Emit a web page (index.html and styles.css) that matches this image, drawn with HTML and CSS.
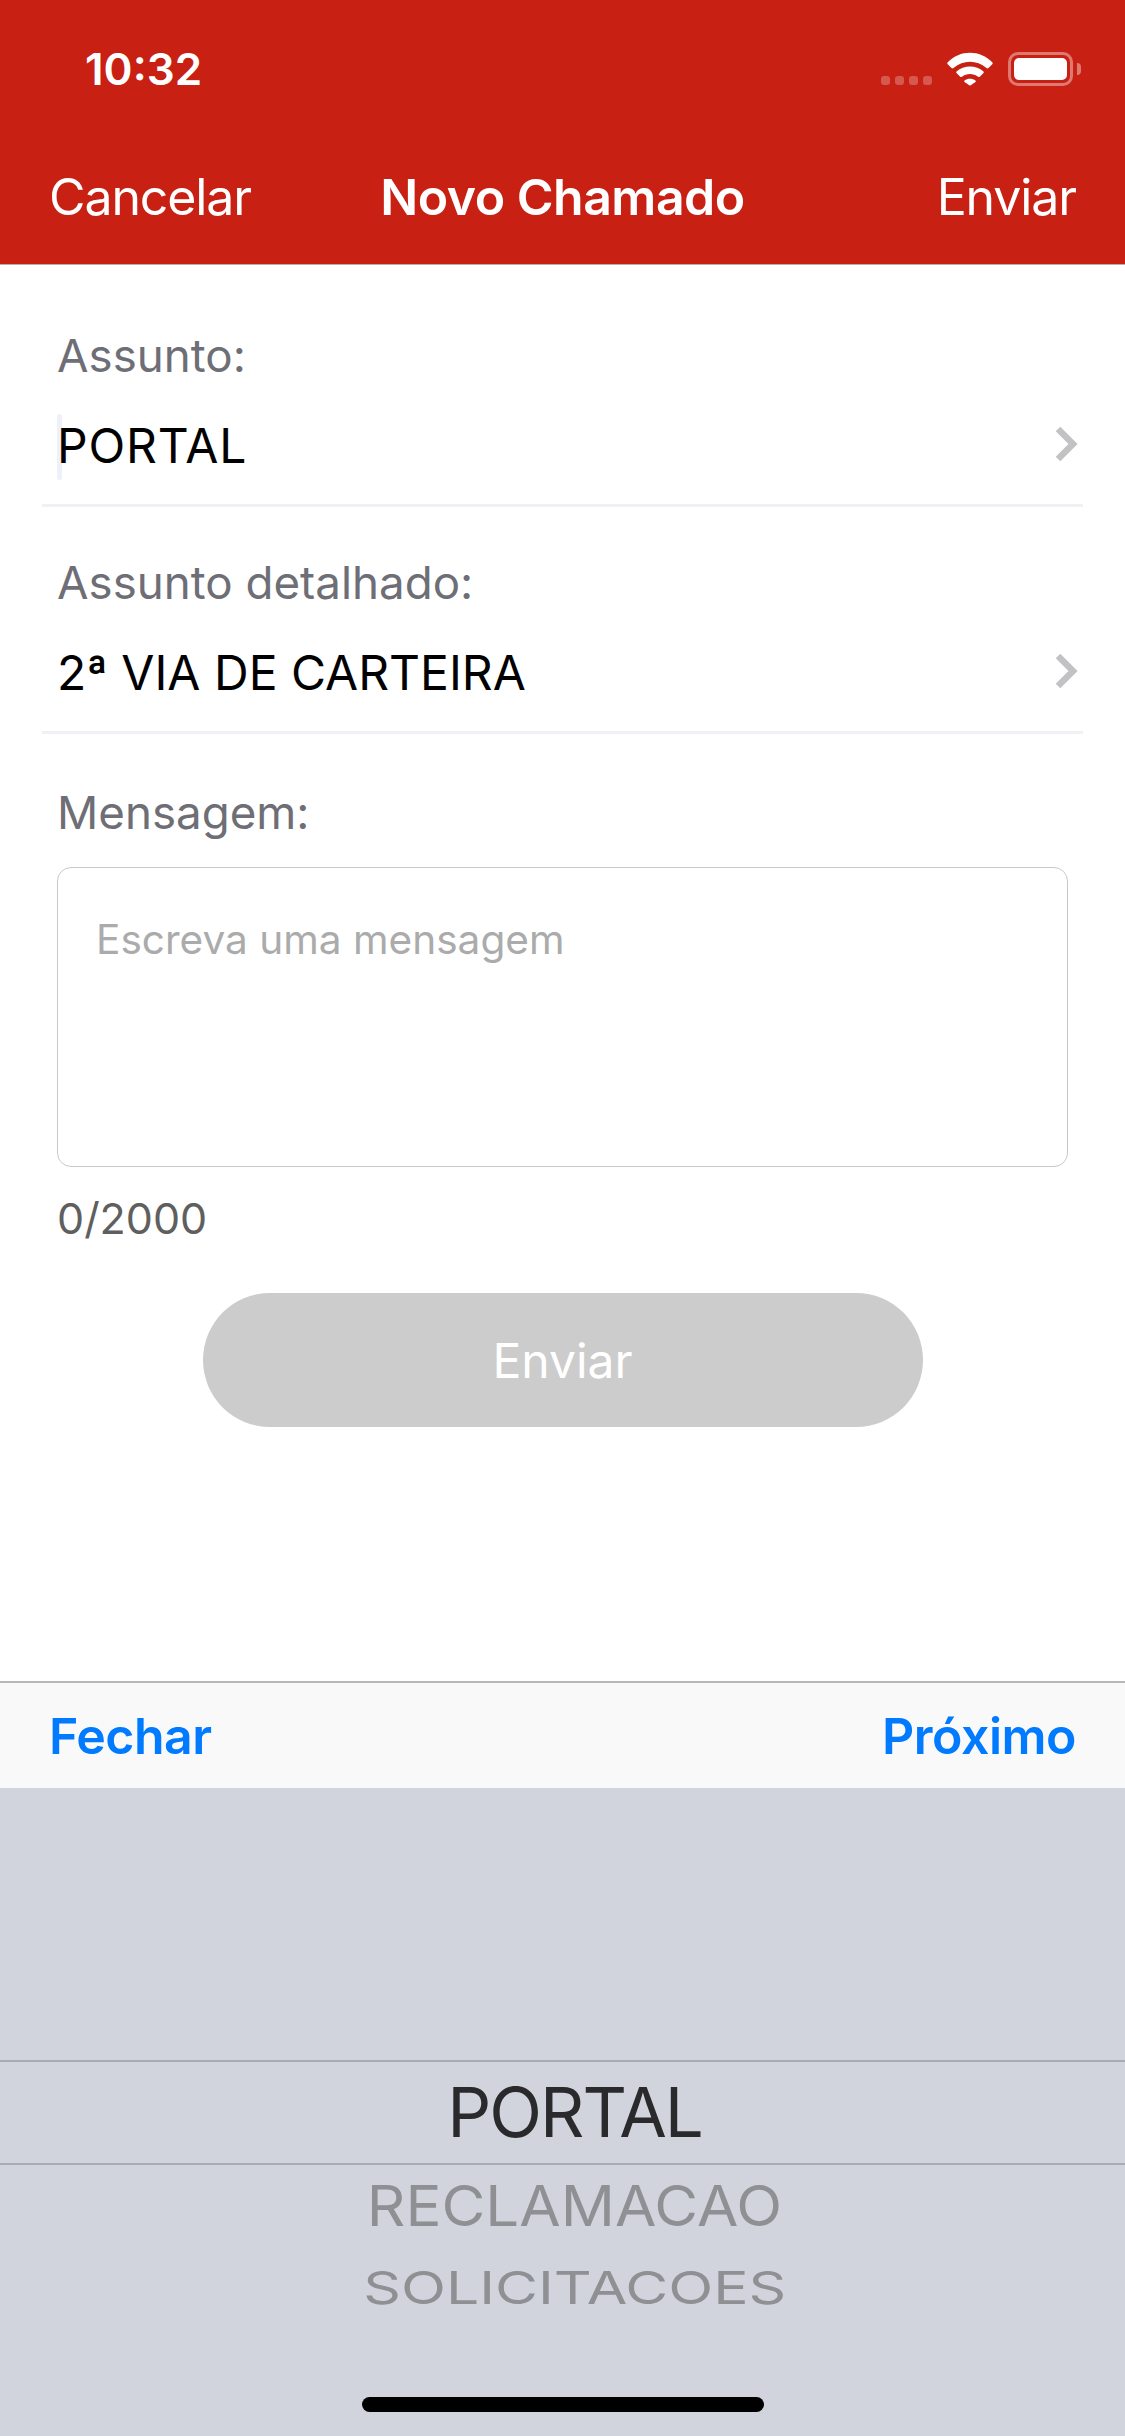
FILE: index.html
```html
<!DOCTYPE html>
<html lang="pt-BR">
<head>
    <meta charset="UTF-8">
    <meta name="viewport" content="width=device-width, initial-scale=1.0">
    <title>Novo Chamado</title>
    <link rel="stylesheet" href="styles.css">
</head>
<body>
    <div class="header">
        <div class="status-bar">
            <span class="time">10:32</span>
            <div class="status-icons">
                <div class="signal">
                    <span></span><span></span><span></span><span></span>
                </div>
                <svg class="wifi" width="46" height="34" viewBox="0 0 46 34">
                    <path d="M0.500 10.500 C13 -2.500 33 -2.500 45.500 10.500 Q46 11.500 45 12.500 L41.500 16 Q40.500 16.800 39.500 16 C29.500 7.500 16.500 7.500 6.500 16 Q5.500 16.800 4.500 16 L1 12.500 Q0 11.500 0.500 10.500 Z" fill="#fff"/>
                    <path d="M9.500 19.500 C17 12.800 29 12.800 36.500 19.500 Q37.200 20.300 36.500 21 L32.800 24.700 Q32 25.300 31 24.700 C26.500 21 19.500 21 15 24.700 Q14 25.300 13.200 24.700 L9.500 21 Q8.800 20.300 9.500 19.500 Z" fill="#fff"/>
                    <path d="M17.500 28.500 C20.500 26.300 25.500 26.300 28.500 28.500 Q29.200 29.200 28.500 30 L23.700 33.300 Q23 33.800 22.300 33.300 L17.500 30 Q16.800 29.200 17.500 28.500 Z" fill="#fff"/>
                </svg>
                <div class="battery">
                    <div class="battery-body"><div class="battery-level"></div></div>
                    <div class="battery-tip"></div>
                </div>
            </div>
        </div>
        <div class="nav-bar">
            <span class="nav-link">Cancelar</span>
            <span class="nav-title">Novo Chamado</span>
            <span class="nav-link nav-right">Enviar</span>
        </div>
    </div>

    <div class="form">
        <div class="field">
            <div class="field-label">Assunto:</div>
            <div class="field-row">
                <span class="field-value has-caret">PORTAL</span>
                <svg class="chevron" width="24" height="36" viewBox="0 0 24 36"><path d="M4 3 L19 18 L4 33" fill="none" stroke="#c2c2c4" stroke-width="6.500"/></svg>
            </div>
        </div>
        <div class="field">
            <div class="field-label">Assunto detalhado:</div>
            <div class="field-row">
                <span class="field-value">2ª VIA DE CARTEIRA</span>
                <svg class="chevron" width="24" height="36" viewBox="0 0 24 36"><path d="M4 3 L19 18 L4 33" fill="none" stroke="#c2c2c4" stroke-width="6.500"/></svg>
            </div>
        </div>
        <div class="message-block">
            <div class="field-label">Mensagem:</div>
            <div class="message-box">Escreva uma mensagem</div>
            <div class="counter">0/2000</div>
            <div class="send-button">Enviar</div>
        </div>
    </div>

    <div class="toolbar">
        <span class="toolbar-link">Fechar</span>
        <span class="toolbar-link">Próximo</span>
    </div>

    <div class="picker">
        <div class="picker-selected"><span>PORTAL</span></div>
        <div class="picker-item item-near"><span>RECLAMACAO</span></div>
        <div class="picker-item item-far"><span>SOLICITACOES</span></div>
        <div class="home-bar"></div>
    </div>
</body>
</html>
```

FILE: styles.css
```css
* {
    box-sizing: border-box;
}
body {
    font-family: Inter, 'Liberation Sans', sans-serif;
    width: 1125px;
    height: 2436px;
    margin: 0;
    display: flex;
    flex-direction: column;
    background-color: #fff;
    overflow: hidden;
}
.header {
    height: 265px;
    background-color: #c92014;
    border-bottom: 1px solid #b2b2b2;
    color: #fff;
}
.status-bar {
    height: 136px;
    padding: 46px 44px 0 85px;
    display: flex;
    justify-content: space-between;
}
.time {
    font-size: 44px;
    font-weight: 600;
    line-height: 46px;
}
.status-icons {
    display: flex;
    align-items: flex-start;
    padding-top: 6px;
}
.signal {
    display: flex;
    gap: 5px;
    margin: 24px 15px 0 0;
}
.signal span {
    width: 9px;
    height: 9px;
    border-radius: 3px;
    background-color: rgba(255,255,255,0.25);
}
.wifi {
    margin-right: 15px;
}
.battery {
    display: flex;
    align-items: center;
}
.battery-body {
    width: 65px;
    height: 34px;
    padding: 3px;
    border: 3px solid rgba(255,255,255,0.4);
    border-radius: 10px;
}
.battery-level {
    height: 100%;
    background-color: #fff;
    border-radius: 5px;
}
.battery-tip {
    width: 4px;
    height: 12px;
    margin-left: 4px;
    background-color: rgba(255,255,255,0.4);
    border-radius: 0 4px 4px 0;
}
.nav-bar {
    height: 128px;
    padding: 31px 49px 0;
    display: grid;
    grid-template-columns: 1fr auto 1fr;
    align-items: start;
}
.nav-link {
    font-size: 50px;
    line-height: 60px;
    letter-spacing: -1.1px;
}
.nav-right {
    justify-self: end;
}
.nav-title {
    font-size: 50px;
    font-weight: 600;
    line-height: 60px;
    letter-spacing: -0.5px;
}
.form {
    flex: 1;
    padding: 0 42px;
}
.field {
    height: 227px;
    padding: 46px 5px 0 15px;
    border-bottom: 3px solid #f0f0f5;
}
.field:first-child {
    height: 242px;
    padding-top: 61px;
}
.field-label {
    font-size: 45.700px;
    line-height: 60px;
    color: #6e6e76;
}
.field-row {
    margin-top: 30px;
    display: flex;
    justify-content: space-between;
    align-items: center;
}
.field-value {
    position: relative;
    font-size: 48px;
    line-height: 60px;
    color: #000;
}
.has-caret {
    letter-spacing: 0.800px;
}
.has-caret::before {
    content: "";
    position: absolute;
    left: 0;
    top: -2px;
    width: 5px;
    height: 66px;
    background-color: #eef0fa;
    border-radius: 3px;
    z-index: -1;
}
.chevron {
    margin-top: -4px;
}
.message-block {
    padding: 49px 15px 0;
}
.message-box {
    margin-top: 24px;
    height: 300px;
    padding: 47px 38px;
    border: 1px solid #c9c9c9;
    border-radius: 14px;
    font-size: 40.600px;
    line-height: 50px;
    color: #ababab;
}
.counter {
    margin-top: 23px;
    font-size: 43px;
    line-height: 56px;
    color: #5f5f5f;
}
.send-button {
    width: 720px;
    height: 134px;
    margin: 47px auto 0;
    border-radius: 67px;
    background-color: #ccc;
    color: #fff;
    font-size: 48px;
    display: flex;
    align-items: center;
    justify-content: center;
}
.toolbar {
    height: 107px;
    padding: 0 49px;
    background-color: #f9f9f9;
    border-top: 2px solid #b8b8b8;
    display: flex;
    justify-content: space-between;
    align-items: center;
}
.toolbar-link {
    font-size: 50px;
    font-weight: 600;
    letter-spacing: -0.5px;
    color: #007aff;
}
.picker {
    position: relative;
    height: 648px;
    padding-top: 272px;
    background-color: #d1d4dc;
    text-align: center;
}
.picker span {
    display: inline-block;
}
.picker-selected {
    height: 107px;
    margin-left: 24px;
    font-size: 69px;
    line-height: 104px;
    letter-spacing: -2px;
    color: #2a2a2c;
}
.picker-selected::before,
.picker-selected::after {
    content: "";
    position: absolute;
    left: 0;
    right: 0;
    height: 2px;
    background-color: #aaabb0;
}
.picker-selected::before {
    top: 272px;
}
.picker-selected::after {
    top: 375px;
}
.picker-item {
    margin-left: 24px;
    color: #8e9094;
    font-size: 60px;
    line-height: 72px;
}
.item-near {
    margin-top: 2px;
}
.item-near span {
    transform: scale(1, 0.94);
}
.item-far {
    margin-top: 10px;
}
.item-far span {
    transform: scale(0.98, 0.76);
}
.home-bar {
    position: absolute;
    left: 362px;
    bottom: 24px;
    width: 402px;
    height: 15px;
    border-radius: 8px;
    background-color: #000;
}
```
